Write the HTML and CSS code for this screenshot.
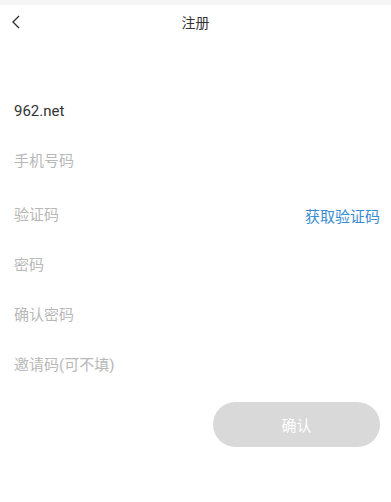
FILE: index.html
```html
<!DOCTYPE html>
<html>
<head>
    <title>注册</title>
    <meta charset="utf-8">
    <link rel="stylesheet" href="styles.css">
</head>
<body>

    <div class="status-bar"></div>

    <div class="header">
        <a href="#" class="back">
            <svg width="10" height="14" viewBox="0 0 10 14">
                <path d="M8 1 L2 7 L8 13" fill="none" stroke="#333" stroke-width="1.4"/>
            </svg>
        </a>
        <h2>注册</h2>
    </div>

    <form class="register-form" onsubmit="return false">
        <div class="form-row">
            <input type="text" class="filled" value="962.net">
        </div>
        <div class="form-row">
            <input type="text" placeholder="手机号码">
        </div>
        <div class="form-row code-row">
            <input type="text" placeholder="验证码">
            <a href="#" class="get-code">获取验证码</a>
        </div>
        <div class="form-row">
            <input type="password" placeholder="密码">
        </div>
        <div class="form-row">
            <input type="password" placeholder="确认密码">
        </div>
        <div class="form-row">
            <input type="text" placeholder="邀请码(可不填)">
        </div>
        <div class="actions">
            <button type="submit" disabled>确认</button>
        </div>
    </form>

</body>
</html>
```

FILE: styles.css
```css
body {
    margin: 0;
    font-family: Roboto, "Noto Sans CJK SC", sans-serif;
    background: #fff;
    color: #333;
}

.status-bar {
    height: 5px;
    background: #f5f5f5;
}

.header {
    position: relative;
    height: 34px;
    display: flex;
    align-items: center;
    justify-content: center;
}

.header h2 {
    margin: 0;
    font-size: 14px;
    font-weight: normal;
    color: #333;
}

.header .back {
    position: absolute;
    left: 11px;
    top: 10px;
    display: flex;
}

.register-form {
    padding: 47px 11px 0 14px;
}

.form-row {
    height: 50px;
    display: flex;
    align-items: center;
}

.code-row {
    margin-top: 4px;
}

.form-row input {
    flex: 1;
    min-width: 0;
    border: none;
    outline: none;
    padding: 0;
    font-family: Roboto, "Noto Sans CJK SC", sans-serif;
    font-size: 15px;
    color: #333;
    background: transparent;
}

.form-row input::placeholder {
    color: #b8b8b8;
}

.get-code {
    font-size: 15px;
    color: #3a8ccf;
    text-decoration: none;
}

.actions {
    display: flex;
    justify-content: flex-end;
    margin-top: 12px;
}

.actions button {
    width: 167px;
    height: 45px;
    border: none;
    border-radius: 23px;
    background: #d9d9d9;
    color: #fff;
    font-family: Roboto, "Noto Sans CJK SC", sans-serif;
    font-size: 15px;
}
```
